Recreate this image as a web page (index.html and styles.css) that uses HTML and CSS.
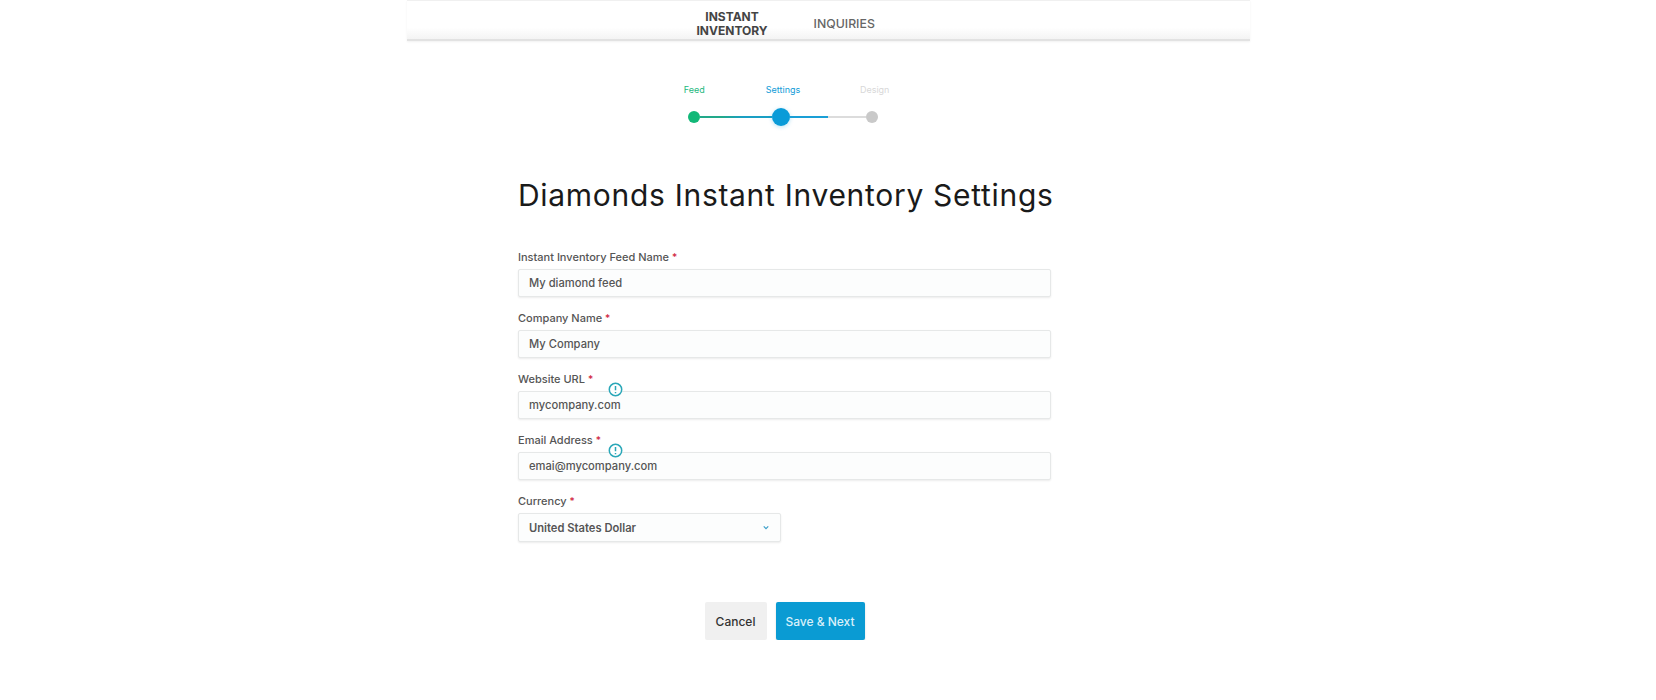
FILE: index.html
```html
<!DOCTYPE html>
<html lang="en">
  <head>
    <meta charset="UTF-8" />
    <title>Diamonds Instant Inventory Settings</title>
    <link rel="stylesheet" href="styles.css">
  </head>
  <body>
    <div class="top-nav">
      <a class="nav-link active">INSTANT<br />INVENTORY</a>
      <a class="nav-link">INQUIRIES</a>
    </div>

    <div class="stepper">
      <div class="step-labels">
        <span class="step-label feed">Feed</span>
        <span class="step-label settings">Settings</span>
        <span class="step-label design">Design</span>
      </div>
      <div class="step-track">
        <div class="dot dot-green"></div>
        <div class="seg seg-done"></div>
        <div class="dot dot-blue"></div>
        <div class="seg seg-part"></div>
        <div class="seg seg-todo"></div>
        <div class="dot dot-grey"></div>
      </div>
    </div>

    <form class="settings-form">
      <h1>Diamonds Instant Inventory Settings</h1>

      <div class="field">
        <label>Instant Inventory Feed Name <span class="req">*</span></label>
        <input type="text" value="My diamond feed" />
      </div>

      <div class="field">
        <label>Company Name <span class="req">*</span></label>
        <input type="text" value="My Company" />
      </div>

      <div class="field">
        <label>Website URL <span class="req">*</span></label>
        <input type="text" value="mycompany.com" />
        <svg class="info" viewBox="0 0 14 14"><circle cx="7" cy="7" r="5.8" /><path d="M7 3.8v4M7 9.4v1" /></svg>
      </div>

      <div class="field">
        <label>Email Address <span class="req">*</span></label>
        <input type="text" value="emai@mycompany.com" />
        <svg class="info" viewBox="0 0 14 14"><circle cx="7" cy="7" r="5.8" /><path d="M7 3.8v4M7 9.4v1" /></svg>
      </div>

      <div class="field field-short">
        <label>Currency <span class="req">*</span></label>
        <div class="select">
          United States Dollar
          <svg class="chevron" viewBox="0 0 8 6"><path d="M1 1.5l3 3 3-3" /></svg>
        </div>
      </div>

      <div class="buttons">
        <button type="button" class="btn btn-cancel">Cancel</button>
        <button type="button" class="btn btn-save">Save &amp; Next</button>
      </div>
    </form>
  </body>
</html>
```

FILE: styles.css
```css
body {
  margin: 0;
  background: #fff;
  font-family: Inter, "Liberation Sans", sans-serif;
  color: #333;
}
.top-nav {
  width: 843px;
  height: 41px;
  margin: 0 auto;
  display: flex;
  align-items: center;
  gap: 46px;
  padding: 8px 0 0 290px;
  box-sizing: border-box;
  background: linear-gradient(#fff 70%, #f4f4f4);
  border-top: 1px solid #f0f0f0;
  border-bottom: 2px solid #e2e2e2;
  box-shadow: 0 1px 2px rgba(0, 0, 0, 0.06);
}
.nav-link {
  font-size: 12px;
  line-height: 14px;
  text-align: center;
  color: #666;
  font-weight: 500;
}
.nav-link:last-child {
  font-size: 12.3px;
}
.nav-link.active {
  font-weight: 700;
  color: #444;
}
.stepper {
  width: 240px;
  margin: 42px 0 0 663px;
}
.step-labels {
  display: flex;
  height: 13px;
}
.step-label {
  font-size: 9px;
  line-height: 13px;
  text-align: center;
  width: 60px;
}
.step-label.feed {
  color: #1db87e;
  margin-left: 3px;
}
.step-label.settings {
  color: #0f9bd7;
  margin-left: 32px;
}
.step-label.design {
  color: #d8d8d8;
  margin-left: 35px;
}
.step-track {
  display: flex;
  align-items: center;
  height: 18px;
  margin-top: 12px;
  margin-left: 25px;
}
.dot {
  border-radius: 50%;
  flex: none;
}
.dot-green {
  width: 12px;
  height: 12px;
  background: #12b878;
}
.dot-blue {
  width: 18px;
  height: 18px;
  background: #0a9bd8;
  box-shadow: 0 1px 4px rgba(10, 155, 216, 0.3);
}
.dot-grey {
  width: 12px;
  height: 12px;
  background: #c9c9c9;
}
.seg {
  height: 2px;
}
.seg-done {
  width: 72px;
  background: linear-gradient(90deg, #22a98a 30%, #1a9fc4 60%);
}
.seg-part {
  width: 38px;
  background: #1a9fd6;
}
.seg-todo {
  width: 38px;
  background: #dcdcdc;
}
.settings-form {
  width: 533px;
  margin-left: 518px;
}
h1 {
  margin: 51px 0 0;
  font-size: 30px;
  line-height: 36px;
  font-weight: 400;
  letter-spacing: 0.7px;
  color: #1a1a1a;
  white-space: nowrap;
}
.field {
  position: relative;
  margin-top: 12px;
  height: 49px;
}
h1 + .field {
  margin-top: 35px;
}
.field label {
  display: block;
  margin-bottom: 3px;
  font-size: 11px;
  line-height: 18px;
  font-weight: 500;
  color: #555;
}
.req {
  color: #d0233c;
  font-size: 10px;
}
.field input,
.select {
  display: block;
  width: 100%;
  height: 28px;
  box-sizing: border-box;
  padding: 0 10px;
  border: 1px solid #e6e8e8;
  border-radius: 2px;
  background: #fcfdfd;
  box-shadow: 0 1px 2px rgba(0, 0, 0, 0.08);
  font-family: Inter, "Liberation Sans", sans-serif;
  font-size: 11.2px;
  font-weight: 500;
  color: #555;
  outline: none;
}
.field-short {
  width: 263px;
}
.select {
  display: flex;
  align-items: center;
  justify-content: space-between;
  height: 29px;
  font-weight: 600;
}
.chevron {
  width: 6px;
  height: 5px;
  margin-right: 1px;
  fill: none;
  stroke: #3b9fc9;
  stroke-width: 1.6;
}
.info {
  position: absolute;
  left: 90px;
  top: 12px;
  width: 15px;
  height: 15px;
  fill: #fff;
  stroke: #2aa7b8;
  stroke-width: 1.4;
}
.buttons {
  display: flex;
  justify-content: center;
  gap: 9px;
  margin-top: 61px;
}
.btn {
  height: 38px;
  border: none;
  border-radius: 2px;
  font-family: Inter, "Liberation Sans", sans-serif;
  font-size: 12px;
  font-weight: 500;
}
.btn-cancel {
  width: 62px;
  background: #f0f0f0;
  color: #333;
}
.btn-save {
  width: 89px;
  background: #0a9bd3;
  color: #d9f0fa;
  box-shadow: 0 1px 2px rgba(0, 0, 0, 0.15);
}
```
